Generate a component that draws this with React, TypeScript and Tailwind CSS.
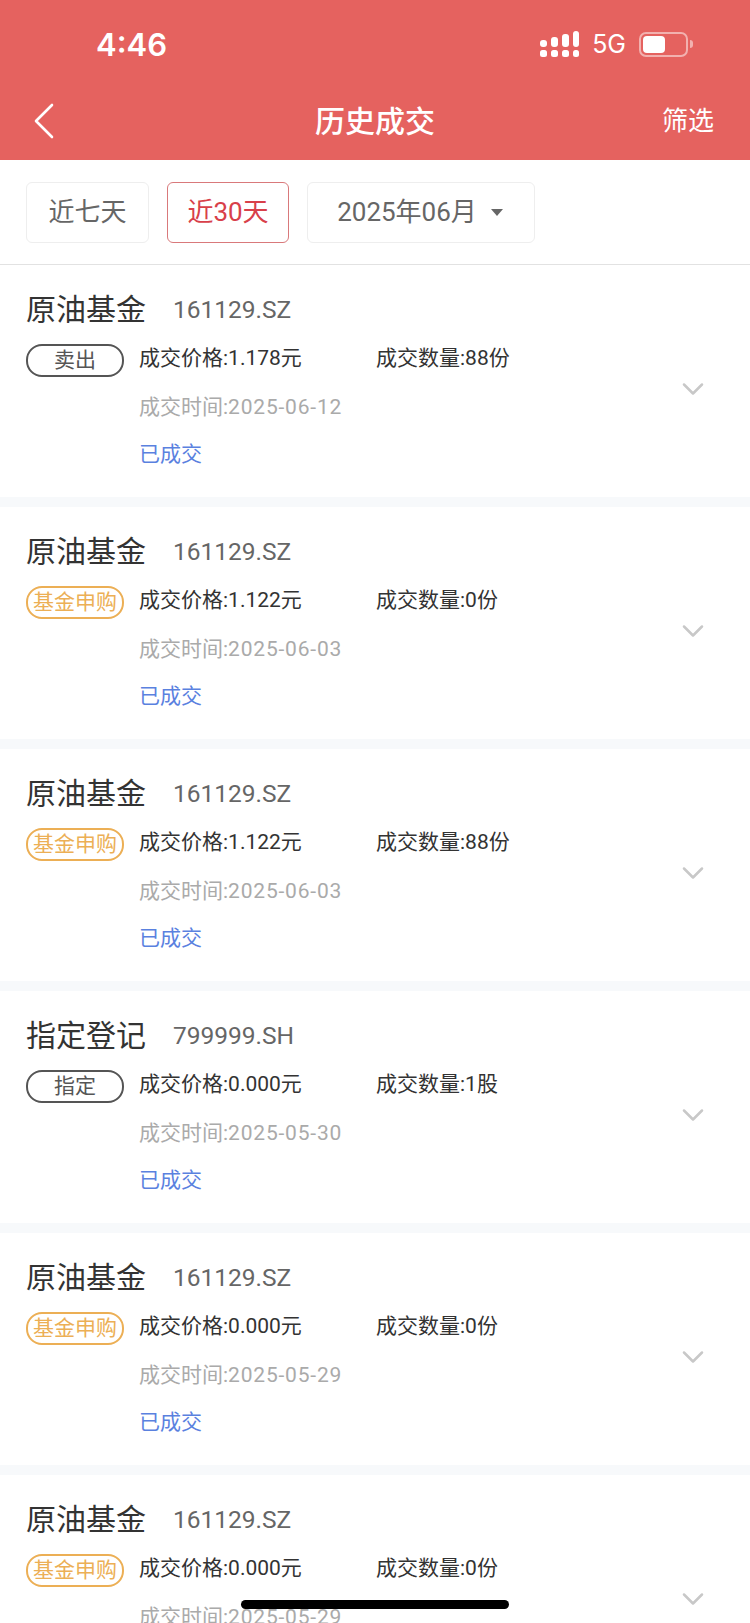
import { ChevronDown } from "lucide-react";

const FONT = "font-['Roboto','Noto_Sans_CJK_SC',sans-serif]";

type Trade = {
  name: string;
  code: string;
  type: string;
  price: string;
  amount: string;
  time: string;
};

const trades: Trade[] = [
  { name: "原油基金", code: "161129.SZ", type: "卖出", price: "1.178元", amount: "88份", time: "2025-06-12" },
  { name: "原油基金", code: "161129.SZ", type: "基金申购", price: "1.122元", amount: "0份", time: "2025-06-03" },
  { name: "原油基金", code: "161129.SZ", type: "基金申购", price: "1.122元", amount: "88份", time: "2025-06-03" },
  { name: "指定登记", code: "799999.SH", type: "指定", price: "0.000元", amount: "1股", time: "2025-05-30" },
  { name: "原油基金", code: "161129.SZ", type: "基金申购", price: "0.000元", amount: "0份", time: "2025-05-29" },
  { name: "原油基金", code: "161129.SZ", type: "基金申购", price: "0.000元", amount: "0份", time: "2025-05-29" },
];

function SignalIcon() {
  return (
    <svg width="39" height="26" viewBox="0 0 39 26" fill="#fff">
      <rect x="0" y="9" width="7" height="7" rx="3" />
      <rect x="0" y="19" width="7" height="7" rx="2.5" />
      <rect x="11" y="6" width="7" height="10" rx="3" />
      <rect x="11" y="19" width="7" height="7" rx="2.5" />
      <rect x="22" y="3" width="7" height="13" rx="3" />
      <rect x="22" y="19" width="7" height="7" rx="2.5" />
      <rect x="33" y="0" width="6" height="16" rx="3" />
      <rect x="33" y="19" width="6" height="7" rx="2.5" />
    </svg>
  );
}

function BatteryIcon() {
  return (
    <div className="flex items-center gap-[2px]">
      <div className="w-[49px] h-[25px] rounded-[7px] border-2 border-white/50 p-[2px]">
        <div className="w-[22px] h-full rounded-[4px] bg-white" />
      </div>
      <div className="w-[3px] h-[8px] rounded-r-full bg-white/50" />
    </div>
  );
}

function BackIcon() {
  return (
    <svg width="20" height="36" viewBox="0 0 20 36" fill="none" stroke="#fff" strokeWidth="2.6" strokeLinecap="round" strokeLinejoin="round">
      <polyline points="18,2 2,18 18,34" />
    </svg>
  );
}

function TradeCard({ trade }: { trade: Trade }) {
  const isOrange = trade.type === "基金申购";
  return (
    <div className="h-[232px] bg-white pl-[26px] pr-[39px] pt-[22px] flex items-center">
      <div className="flex-1 self-start">
        <div className="flex items-center h-[46px]">
          <span className="w-[147px] text-[30px] text-[#333] leading-none">{trade.name}</span>
          <span className="text-[24.5px] text-[#666] leading-none">{trade.code}</span>
        </div>
        <div className="flex mt-[12px]">
          <div
            className={
              isOrange
                ? "w-[98px] h-[33px] mt-[-1px] rounded-[16px] border-2 border-[#ecaf55] text-[#ecaf55] text-[21px] flex items-center justify-center leading-none"
                : "w-[98px] h-[33px] mt-[-1px] rounded-[16px] border-2 border-[#555] text-[#555] text-[21px] flex items-center justify-center leading-none"
            }
          >
            {trade.type}
          </div>
          <div className="ml-[15px] text-[21px] leading-[26px]">
            <div className="flex text-[#333]">
              <span className="w-[237px]">成交价格:{trade.price}</span>
              <span>成交数量:{trade.amount}</span>
            </div>
            <div className="mt-[23px] text-[#aaa]">
              成交时间:<span className="tracking-[0.8px]">{trade.time}</span>
            </div>
            <div className="mt-[21px] text-[#5a81df]">已成交</div>
          </div>
        </div>
      </div>
      <ChevronDown className="text-[#c8c8c8] mb-[6px]" size={36} strokeWidth={1.7} />
    </div>
  );
}

export default function App() {
  return (
    <div className={`${FONT} relative w-[750px] h-[1623px] overflow-hidden bg-[#f7f9fb]`}>
      {/* HEADER */}
      <div className="h-[160px] bg-[#e5625f] text-white">
        <div className="h-[88px] flex items-center justify-between pl-[96px] pr-[57px]">
          <span className="font-['Inter',sans-serif] text-[31px] font-semibold leading-none">4:46</span>
          <div className="flex items-center gap-[13px]">
            <SignalIcon />
            <span className="font-['Inter',sans-serif] text-[25px] leading-none">5G</span>
            <BatteryIcon />
          </div>
        </div>
        <div className="h-[66px] flex items-center justify-between pl-[34px] pr-[36px] relative">
          <BackIcon />
          <span className="absolute left-0 right-0 text-center text-[30px] font-medium">历史成交</span>
          <span className="text-[26px]">筛选</span>
        </div>
      </div>

      {/* FILTERS */}
      <div className="h-[105px] bg-white border-b border-[#e2e2e2] flex items-start pt-[22px] pl-[26px] gap-[18px]">
        <div className="w-[123px] h-[61px] rounded-[6px] border border-[#eee] flex items-center justify-center text-[26px] text-[#666]">
          近七天
        </div>
        <div className="w-[122px] h-[61px] rounded-[6px] border border-[#d9797b] flex items-center justify-center text-[26px] text-[#d8404a]">
          近30天
        </div>
        <div className="w-[228px] h-[61px] rounded-[6px] border border-[#eee] flex items-center justify-center gap-[14px] pr-[2px] text-[26px] text-[#666]">
          <span>2025年06月</span>
          <span className="mt-[-1px] w-0 h-0 border-x-[6px] border-x-transparent border-t-[7px] border-t-[#666]" />
        </div>
      </div>

      {/* LIST */}
      <div className="flex flex-col gap-[10px]">
        {trades.map((t, i) => (
          <TradeCard key={i} trade={t} />
        ))}
      </div>

      {/* HOME INDICATOR */}
      <div className="absolute left-[241px] top-[1600px] w-[268px] h-[9px] rounded-full bg-black" />
    </div>
  );
}
